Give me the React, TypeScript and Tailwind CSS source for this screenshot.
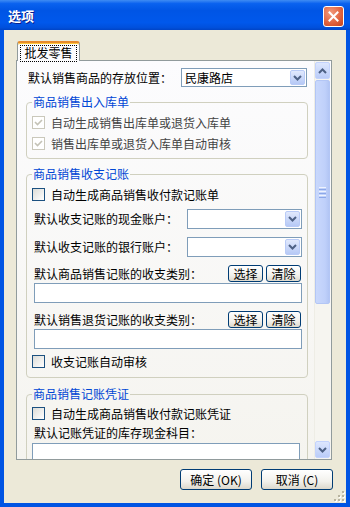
import React from "react";

function Chevron({ up }: { up?: boolean }) {
  return (
    <svg width="9" height="6" viewBox="0 0 9 6">
      <path
        d={up ? "M1 5 L4.5 1.5 L8 5" : "M1 1 L4.5 4.5 L8 1"}
        fill="none"
        stroke="#4D6185"
        strokeWidth="2"
      />
    </svg>
  );
}

function Combo({ className, text }: { className: string; text?: string }) {
  return (
    <div className={"flex border border-[#7F9DB9] bg-white p-px " + className}>
      <div className="flex-1 flex items-center pl-[2px] text-[12px] leading-none text-black">{text}</div>
      <div className="w-[15px] flex items-center justify-center rounded-[2px] border border-[#B9CBF7] bg-[linear-gradient(to_bottom,#E1E9FD,#B6C9F6)]">
        <Chevron />
      </div>
    </div>
  );
}

function Check({ checked, disabled, label }: { checked?: boolean; disabled?: boolean; label: string }) {
  return (
    <div className="flex items-center h-[21px] -ml-[2px]">
      <div
        className={
          disabled
            ? "w-[13px] h-[13px] border border-[#CAC8BB] bg-white flex items-center justify-center"
            : "w-[13px] h-[13px] border border-[#1C5180] bg-[linear-gradient(135deg,#DCDCD7,#FFFFFF)] flex items-center justify-center"
        }
      >
        {checked && (
          <svg width="9" height="9" viewBox="0 0 9 9">
            <path d="M1 4 L3.5 6.5 L8 2" fill="none" stroke={disabled ? "#C4C2B6" : "#21A121"} strokeWidth="1.6" />
          </svg>
        )}
      </div>
      <span className={"ml-[6px] text-[12px] leading-none " + (disabled ? "text-[#444444]" : "text-black")}>{label}</span>
    </div>
  );
}

function XPButton({ className, label }: { className: string; label: string }) {
  return (
    <div
      className={
        "flex items-center justify-center rounded-[3px] border border-[#003C74] bg-[linear-gradient(to_bottom,#FFFFFF,#F2F1EC_60%,#DCD8CC)] text-[12px] leading-none text-black " +
        className
      }
    >
      {label}
    </div>
  );
}

function Legend({ text }: { text: string }) {
  return <legend className="-ml-[2px] px-[1px] text-[12px] leading-[14px] text-[#0046D5]">{text}</legend>;
}

function Scrollbar() {
  return (
    <div className="w-[16px] mr-[1px] flex flex-col bg-[#F6F5F0] border-l border-[#EEEDE5]">
      <div className="h-[17px] mt-[1px] flex items-center justify-center rounded-[2px] border border-[#C3D3FD] bg-[linear-gradient(to_bottom,#DDE7FE,#BACCF8)]">
        <Chevron up />
      </div>
      <div className="h-[224px] mt-px flex flex-col items-center justify-center gap-[1px] rounded-[2px] border border-[#B3C6F5] bg-[linear-gradient(to_right,#C9D8FC,#BFD0FA_70%,#B2C5F4)]">
        <div className="w-[7px] h-px bg-[#EEF3FE]" />
        <div className="w-[7px] h-px bg-[#8CA8E8]" />
        <div className="w-[7px] h-px bg-[#EEF3FE]" />
        <div className="w-[7px] h-px bg-[#8CA8E8]" />
        <div className="w-[7px] h-px bg-[#EEF3FE]" />
        <div className="w-[7px] h-px bg-[#8CA8E8]" />
      </div>
      <div className="flex-1" />
      <div className="h-[17px] mb-[1px] flex items-center justify-center rounded-[2px] border border-[#C3D3FD] bg-[linear-gradient(to_bottom,#DDE7FE,#BACCF8)]">
        <Chevron />
      </div>
    </div>
  );
}

export default function App() {
  return (
    <div className="w-[350px] h-[507px] flex flex-col bg-[#0054E3] font-['Noto_Sans_CJK_SC',sans-serif] overflow-hidden">
      {/* Title bar */}
      <div className="h-[30px] flex items-center justify-between pl-[8px] pr-[6px] bg-[linear-gradient(to_bottom,#3F8CF3_0%,#0A62EF_12%,#0055E5_35%,#0058EC_75%,#0050DC_92%,#0044C6_100%)]">
        <span className="text-white font-bold text-[13px] leading-none [text-shadow:1px_1px_0_#0A1E8C]">选项</span>
        <div className="w-[21px] h-[21px] mt-[2px] rounded-[3px] border border-white bg-[radial-gradient(circle_at_35%_30%,#F29A7C,#E0603C_60%,#C5421C)] flex items-center justify-center">
          <svg width="11" height="11" viewBox="0 0 11 11">
            <path d="M1.5 1.5 L9.5 9.5 M9.5 1.5 L1.5 9.5" stroke="white" strokeWidth="2" strokeLinecap="square" />
          </svg>
        </div>
      </div>

      {/* Client */}
      <div className="flex-1 mx-[4px] mb-[4px] bg-[#ECE9D8] flex flex-col relative">
        {/* Tabs */}
        <div className="pl-[13px] pt-[11px] flex">
          <div className="relative z-10 -mb-px h-[20px] w-[63px] bg-[#FCFCFE] border-x border-[#919B9C] border-t-[2px] border-t-[#E68B2C] rounded-t-[3px] shadow-[inset_0_1px_0_#FFC83C] flex items-center justify-center">
            <span className="px-[3px] h-[15px] mt-[2px] flex items-center outline outline-1 outline-dotted outline-black text-[12px] leading-none text-black">
              批发零售
            </span>
          </div>
        </div>

        {/* Panel */}
        <div className="ml-[12px] w-[316px] h-[400px] border border-[#919B9C] bg-[linear-gradient(to_bottom,#FCFCFE,#F5F4EF)] flex">
          <div className="flex-1 overflow-hidden">
            <div className="pt-[7px] pl-[11px] flex items-center">
              <span className="w-[153px] text-[12px] leading-none text-black">默认销售商品的存放位置：</span>
              <Combo className="w-[126px] h-[19px]" text="民康路店" />
            </div>

            <fieldset className="mt-[8px] ml-[9px] w-[282px] border border-[#D0D0BF] rounded-[4px] pl-[7px] pr-[5px] pt-[3px] pb-[4px]">
              <Legend text="商品销售出入库单" />
              <Check checked disabled label="自动生成销售出库单或退货入库单" />
              <Check checked disabled label="销售出库单或退货入库单自动审核" />
            </fieldset>

            <fieldset className="mt-[8px] ml-[9px] w-[282px] border border-[#D0D0BF] rounded-[4px] pl-[7px] pr-[5px] pt-[3px] pb-[5px]">
              <Legend text="商品销售收支记账" />
              <Check label="自动生成商品销售收付款记账单" />
              <div className="mt-[4px] flex items-center justify-between">
                <span className="text-[12px] leading-none text-black">默认收支记账的现金账户：</span>
                <Combo className="w-[115px] h-[20px]" />
              </div>
              <div className="mt-[8px] flex items-center justify-between">
                <span className="text-[12px] leading-none text-black">默认收支记账的银行账户：</span>
                <Combo className="w-[115px] h-[20px]" />
              </div>
              <div className="mt-[8px] flex items-center">
                <span className="flex-1 text-[12px] leading-none text-black">默认商品销售记账的收支类别：</span>
                <XPButton className="w-[35px] h-[17px]" label="选择" />
                <XPButton className="ml-[3px] mr-px w-[35px] h-[17px]" label="清除" />
              </div>
              <div className="mt-px h-[20px] border border-[#7F9DB9] bg-white" />
              <div className="mt-[8px] flex items-center">
                <span className="flex-1 text-[12px] leading-none text-black">默认销售退货记账的收支类别：</span>
                <XPButton className="w-[35px] h-[17px]" label="选择" />
                <XPButton className="ml-[3px] mr-px w-[35px] h-[17px]" label="清除" />
              </div>
              <div className="mt-px h-[20px] border border-[#7F9DB9] bg-white" />
              <div className="mt-[2px]">
                <Check label="收支记账自动审核" />
              </div>
            </fieldset>

            <fieldset className="mt-[9px] ml-[9px] w-[282px] border border-[#D0D0BF] rounded-[4px] pl-[7px] pr-[5px] pt-[2px] pb-[10px]">
              <Legend text="商品销售记账凭证" />
              <Check label="自动生成商品销售收付款记账凭证" />
              <div className="mt-px h-[16px] flex items-center text-[12px] leading-none text-black">默认记账凭证的库存现金科目：</div>
              <div className="mt-[2px] -ml-[2px] w-[268px] h-[20px] border border-[#7F9DB9] bg-white" />
            </fieldset>
          </div>
          <Scrollbar />
        </div>

        {/* Footer buttons */}
        <div className="mt-[9px] flex justify-end gap-[9px] pr-[13px]">
          <XPButton className="w-[72px] h-[21px]" label="确定 (OK)" />
          <XPButton className="w-[72px] h-[21px]" label="取消 (C)" />
        </div>

        {/* Size grip */}
        <svg className="absolute right-[1px] bottom-[1px]" width="12" height="12" viewBox="0 0 12 12">
          {[
            [9, 1], [9, 5], [5, 5], [9, 9], [5, 9], [1, 9],
          ].map(([x, y], i) => (
            <g key={i}>
              <rect x={x + 1} y={y + 1} width="2" height="2" fill="#FFFFFF" />
              <rect x={x} y={y} width="2" height="2" fill="#B8B49F" />
            </g>
          ))}
        </svg>
      </div>
    </div>
  );
}
